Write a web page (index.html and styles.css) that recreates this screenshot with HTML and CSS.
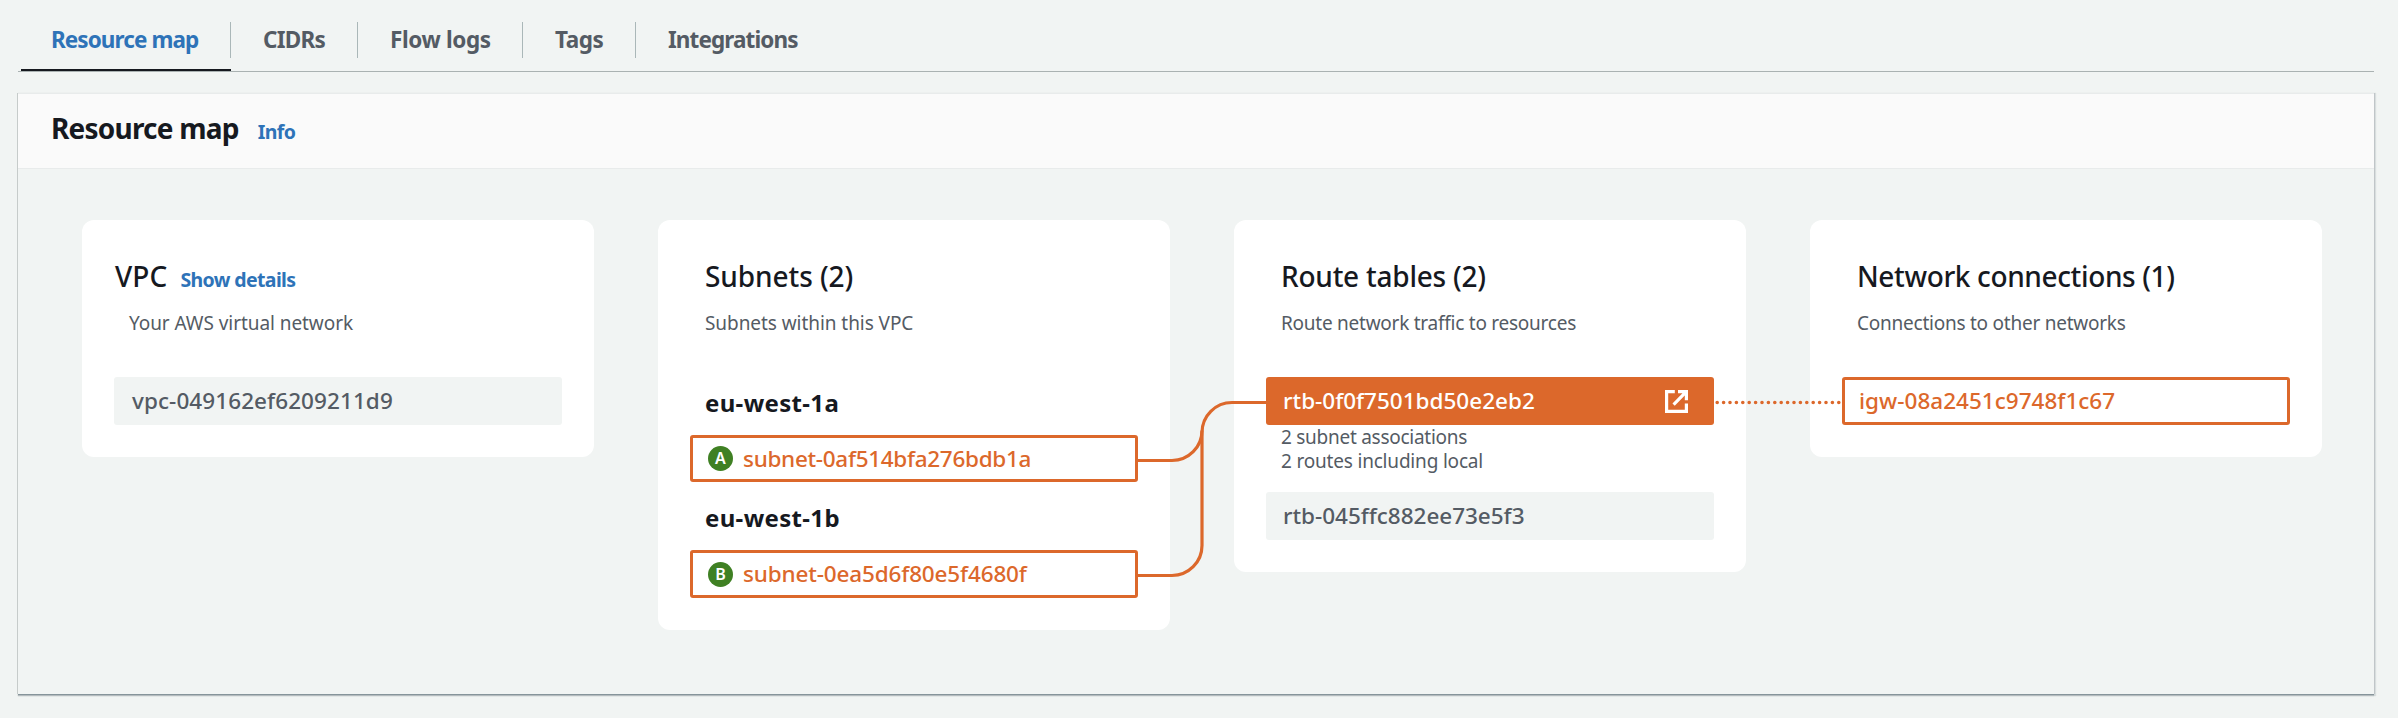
FILE: index.html
```html
<!DOCTYPE html>
<html lang="en">
<head>
<meta charset="utf-8">
<title>Resource map</title>
<link rel="stylesheet" href="styles.css">
</head>
<body>
<nav class="tabs">
  <a class="tab tab-map active"><span>Resource map</span></a>
  <a class="tab tab-cidrs"><span>CIDRs</span></a>
  <a class="tab tab-logs"><span>Flow logs</span></a>
  <a class="tab tab-tags"><span>Tags</span></a>
  <a class="tab tab-int"><span>Integrations</span></a>
</nav>
<main class="panel">
  <header class="panel-header">
    <h1>Resource map</h1>
    <a class="info">Info</a>
  </header>
  <div class="map">
    <section class="card">
      <div class="vpc-head"><h2 class="t-vpc">VPC</h2><a class="details">Show details</a></div>
      <p class="desc d-vpc">Your AWS virtual network</p>
      <div class="node muted n-vpc">vpc-049162ef6209211d9</div>
    </section>
    <section class="card">
      <h2 class="t-subnets">Subnets (2)</h2>
      <p class="desc d-subnets">Subnets within this VPC</p>
      <h3 class="zone first">eu-west-1a</h3>
      <div class="node outlined subnet compact"><span class="badge">A</span><span class="n-sub-a">subnet-0af514bfa276bdb1a</span></div>
      <h3 class="zone">eu-west-1b</h3>
      <div class="node outlined subnet"><span class="badge">B</span><span class="n-sub-b">subnet-0ea5d6f80e5f4680f</span></div>
    </section>
    <section class="card">
      <h2 class="t-routes">Route tables (2)</h2>
      <p class="desc d-routes">Route network traffic to resources</p>
      <div class="node selected">
        <span>rtb-0f0f7501bd50e2eb2</span>
        <svg class="external" viewBox="0 0 23 23" width="23" height="23">
          <path d="M9.8 1.6H1.6V21.4H21.4V13.4M13 1.6H21.4V10.3M20.8 2.2L8.6 14.6"/>
        </svg>
      </div>
      <ul class="facts">
        <li class="f-assoc">2 subnet associations</li>
        <li class="f-routes">2 routes including local</li>
      </ul>
      <div class="node muted n-rtb">rtb-045ffc882ee73e5f3</div>
    </section>
    <section class="card">
      <h2 class="t-net">Network connections (1)</h2>
      <p class="desc d-net">Connections to other networks</p>
      <div class="node outlined n-igw">igw-08a2451c9748f1c67</div>
    </section>
    <svg class="links" viewBox="82 220 2240 410" width="2240" height="410">
      <path d="M1137 460.5H1172A30 30 0 0 0 1202 430.5"/>
      <path d="M1137 575.5H1172A30 30 0 0 0 1202 545.5V432.5A30 30 0 0 1 1232 402.5H1267"/>
      <path class="dotted" d="M1717.2 402.5H1840"/>
    </svg>
  </div>
</main>
</body>
</html>
```
FILE: styles.css
```css
* { box-sizing: border-box; }
body {
  margin: 0;
  height: 718px;
  padding: 22px 24px 0 18px;
  background: #f1f4f3;
  color: #16191f;
  font-family: "Noto Sans", sans-serif;
  font-variant-ligatures: none;
  overflow: hidden;
}
h1, h2, h3, p, ul { margin: 0; padding: 0; list-style: none; }

.tabs {
  display: flex;
  height: 50px;
  padding-left: 3px;
  border-bottom: 1px solid #aab2b2;
}
.tab {
  height: 49px;
  color: #545b64;
  font-size: 22.5px;
  font-weight: 700;
  white-space: nowrap;
}
.tab span {
  display: block;
  height: 36px;
  padding-left: 32px;
  line-height: 36px;
  border-right: 1px solid #aab7b8;
}
.tab.active { color: #2e73b8; border-bottom: 2px solid #16191f; }
.tab.active span { padding-left: 30px; }
.tab-map { width: 210px; letter-spacing: -.92px; }
.tab-cidrs { width: 127px; letter-spacing: -.74px; }
.tab-logs { width: 165px; letter-spacing: -.38px; }
.tab-tags { width: 113px; letter-spacing: -.5px; }
.tab-int { letter-spacing: -.9px; }
.tab-int span { border-right: 0; }

.panel {
  height: 601px;
  margin-top: 21px;
  border-top: 1px solid #e8ebeb;
  box-shadow: 0 1px 0 #86949a, 1px 0 0 #c0c5c8, -1px 0 0 #c6cbca, 0 2px 1px #b4bbbe, 1px 1px 1px 1px rgba(0, 28, 36, .1);
  background: #f1f4f3;
}
.panel-header {
  display: flex;
  align-items: baseline;
  height: 75px;
  padding: 16px 0 0 33px;
  background: #fafafa;
  border-bottom: 1px solid #e8ebeb;
}
h1 { font-size: 28px; line-height: 36px; letter-spacing: -.78px; }
.info, .details {
  color: #2e73b8;
  font-size: 19.5px;
  font-weight: 700;
}
.info { margin-left: 19px; letter-spacing: -.6px; }
.details { margin-left: 13px; letter-spacing: -.62px; }

.map {
  position: relative;
  display: flex;
  align-items: flex-start;
  gap: 64px;
  padding: 51px 0 0 64px;
}
.card {
  flex: none;
  width: 512px;
  padding: 38px 32px 32px;
  background: #fff;
  border-radius: 12px;
}
.vpc-head { display: flex; align-items: baseline; height: 36px; }
h2 { margin-left: 15px; font-size: 28px; font-weight: 500; line-height: 36px; white-space: nowrap; }
.t-vpc { margin-left: 1px; letter-spacing: .1px; }
.t-subnets { letter-spacing: -.08px; }
.t-routes { letter-spacing: -.24px; }
.t-net { letter-spacing: -.37px; }
.desc {
  margin: 17px 0 42px 15px;
  color: #545b64;
  font-size: 19px;
  line-height: 24px;
}
.d-vpc { letter-spacing: -.06px; }
.d-subnets { letter-spacing: -.06px; }
.d-routes { letter-spacing: -.25px; }
.d-net { letter-spacing: -.24px; }

.node {
  display: flex;
  align-items: center;
  height: 48px;
  padding: 0 17px;
  border-radius: 3px;
  font-size: 22.5px;
  font-weight: 500;
  line-height: 30px;
  white-space: nowrap;
}
.muted { background: #f1f4f3; color: #545b64; }
.outlined { padding: 0 14px; border: 3px solid #dc682b; color: #dc682b; }
.selected { justify-content: space-between; padding-right: 26px; background: #dc682b; color: #fff; }
.subnet { gap: 10px; padding-left: 15px; }
.compact { height: 47px; }
.n-vpc { padding-left: 18px; letter-spacing: .08px; }
.n-sub-a { letter-spacing: -.3px; }
.n-sub-b { letter-spacing: -.15px; }
.n-rtb { letter-spacing: -.02px; }
.n-igw { letter-spacing: .02px; }

.zone { height: 68px; padding: 20px 0 0 15px; font-size: 24px; line-height: 32px; letter-spacing: .34px; }
.zone.first { height: 58px; padding-top: 10px; }
.badge {
  width: 25px;
  height: 25px;
  border-radius: 50%;
  background: #3f8023;
  color: #fff;
  font-size: 16px;
  font-weight: 600;
  line-height: 25px;
  text-align: center;
}
.facts { height: 67px; padding-left: 15px; color: #545b64; font-size: 19px; line-height: 24px; }
.f-assoc { letter-spacing: -.27px; }
.f-routes { letter-spacing: -.19px; }

.external { fill: none; stroke: #fff; stroke-width: 3.2; }
.links {
  position: absolute;
  left: 64px;
  top: 51px;
  fill: none;
  stroke: #dc682b;
  stroke-width: 3.2;
  pointer-events: none;
}
.dotted { stroke-width: 3.6; stroke-linecap: round; stroke-dasharray: 0 6.4; }
```
